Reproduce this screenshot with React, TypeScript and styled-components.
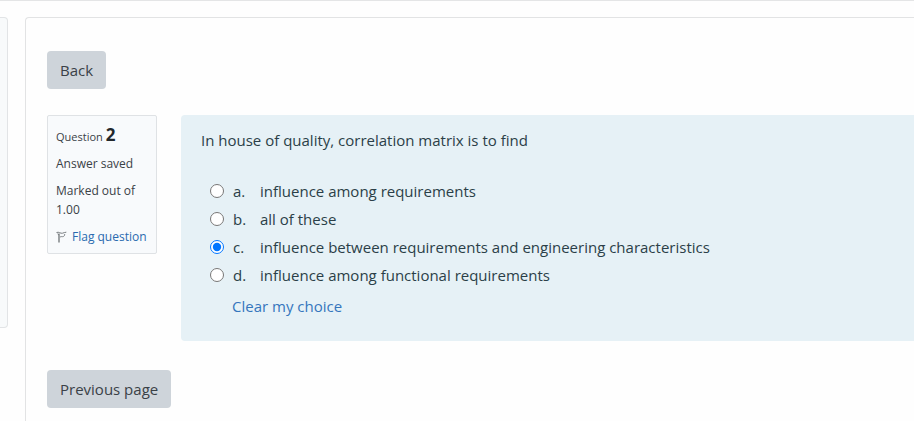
import React, { useState } from "react";
import styled, { createGlobalStyle } from "styled-components";

const GlobalStyle = createGlobalStyle`
  *, *::before, *::after { box-sizing: border-box; }
  body {
    margin: 0;
    overflow: hidden;
    background: #fefefe;
    color: #3a4147;
    font-family: "Open Sans", "Noto Sans", sans-serif;
    font-size: 15px;
    line-height: 22px;
  }
`;

const Page = styled.div`
  display: flex;
  align-items: flex-start;
  gap: 17px;
  min-height: 100vh;
  padding-top: 16px;
  border-top: 1px solid #e4e5e6;
`;

const SideBlock = styled.aside`
  flex: none;
  width: 8px;
  height: 311px;
  border: 1px solid #e2e4e6;
  border-left: 0;
  border-radius: 0 4px 4px 0;
  background: #f8fafb;
`;

const Region = styled.main`
  flex: 1;
  min-width: 0;
  min-height: calc(100vh - 17px);
  display: flex;
  flex-direction: column;
  align-items: flex-start;
  padding: 33px 0 12px 21px;
  border: 1px solid #e2e3e4;
  border-width: 1px 0 0 1px;
  border-top-left-radius: 4px;
`;

const Button = styled.button`
  padding: 8px 13px;
  border: 0;
  border-radius: 4px;
  background: #ced4da;
  color: #3a4147;
  font: inherit;
  cursor: pointer;
`;

const Question = styled.section`
  align-self: stretch;
  display: flex;
  align-items: flex-start;
  gap: 24px;
  margin: 26px 0 29px;
`;

const Info = styled.div`
  flex: none;
  width: 110px;
  padding: 9px 8px 7px;
  border: 1px solid #dfe2e5;
  border-radius: 2px;
  background: #f8fafc;
  font-size: 12px;
  line-height: 19px;
`;

const QuestionTitle = styled.h3`
  margin: 0 0 8px;
  font-size: 11px;
  font-weight: 400;
  line-height: 19px;
`;

const Number = styled.span`
  color: #22272b;
  font-size: 17px;
  font-weight: 700;
`;

const Detail = styled.div`
  margin-bottom: 8px;
`;

const FlagLink = styled.a`
  display: flex;
  align-items: center;
  gap: 5px;
  color: #2a6aaf;
  text-decoration: none;
  white-space: nowrap;
`;

const Formulation = styled.form`
  flex: 1;
  min-width: 0;
  padding: 14px 20px 24px;
  border-radius: 4px 0 0 4px;
  background: #e6f1f6;
  color: #2b3f48;
`;

const Answers = styled.fieldset`
  margin: 0;
  padding: 0 0 0 9px;
  border: 0;
`;

const Prompt = styled.legend`
  padding: 0;
  margin: 0 0 26px -9px;
`;

const Answer = styled.label`
  display: flex;
  align-items: center;
  height: 28px;
`;

const Radio = styled.input`
  flex: none;
  width: 14px;
  height: 14px;
  margin: 0 9px 0 0;
`;

const Letter = styled.span`
  flex: none;
  width: 27px;
`;

const ClearLink = styled.a`
  display: inline-block;
  margin: 6px 0 0 31px;
  color: #3576bd;
  text-decoration: none;
`;

const options = [
  { letter: "a", text: "influence among requirements" },
  { letter: "b", text: "all of these" },
  { letter: "c", text: "influence between requirements and engineering characteristics" },
  { letter: "d", text: "influence among functional requirements" },
];

function FlagIcon() {
  return (
    <svg width="11" height="12" viewBox="0 0 11 12" fill="none" stroke="#777b7f" aria-hidden="true">
      <path d="M3 2.5V11.5" strokeWidth="1.4" />
      <path d="M0.5 1.5C3 0.5 4.5 2.8 6.5 2.2C8 1.8 9 1.2 10.3 1.2" />
      <path d="M4 6C5.5 5 7.2 6.5 8.3 4.8L8.8 3" strokeWidth="0.9" />
      <path d="M1.5 2.8L3 4" />
    </svg>
  );
}

export default function App() {
  const [choice, setChoice] = useState("c");
  return (
    <>
      <GlobalStyle />
      <Page>
        <SideBlock />
        <Region>
          <Button type="button">Back</Button>
          <Question>
            <Info>
              <QuestionTitle>
                Question <Number>2</Number>
              </QuestionTitle>
              <Detail>Answer saved</Detail>
              <Detail>Marked out of 1.00</Detail>
              <FlagLink href="#flag">
                <FlagIcon />
                Flag question
              </FlagLink>
            </Info>
            <Formulation>
              <Answers>
                <Prompt>In house of quality, correlation matrix is to find</Prompt>
                {options.map(({ letter, text }) => (
                  <Answer key={letter}>
                    <Radio
                      type="radio"
                      name="answer"
                      value={letter}
                      checked={choice === letter}
                      onChange={() => setChoice(letter)}
                    />
                    <Letter>{letter}.</Letter>
                    <span>{text}</span>
                  </Answer>
                ))}
              </Answers>
              <ClearLink
                href="#clear"
                onClick={(event) => {
                  event.preventDefault();
                  setChoice("");
                }}
              >
                Clear my choice
              </ClearLink>
            </Formulation>
          </Question>
          <Button type="button">Previous page</Button>
        </Region>
      </Page>
    </>
  );
}
